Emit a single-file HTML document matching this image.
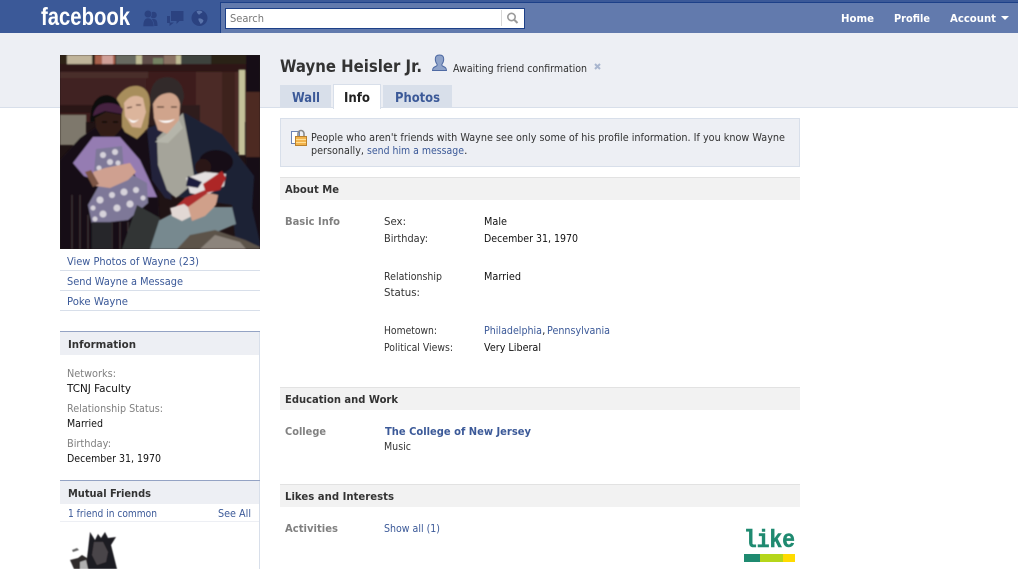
<!DOCTYPE html>
<html><head><meta charset="utf-8"><title>Wayne Heisler Jr.</title>
<style>
html,body{margin:0;padding:0;background:#fff;width:1018px;height:569px;overflow:hidden}
svg{display:block}
text{font-family:"DejaVu Sans","Liberation Sans",sans-serif;font-size:11px;fill:#333}
.b{font-weight:bold}
.l{fill:#3b5998}
.g{fill:#808080}
.k{fill:#111}
.h{font-weight:bold;fill:#333}
</style></head><body>
<svg width="1018" height="569" viewBox="0 0 1018 569" xmlns="http://www.w3.org/2000/svg">
<defs>
<filter id="bl" x="-5%" y="-5%" width="110%" height="110%"><feGaussianBlur stdDeviation="0.8"/></filter>
<filter id="bs"><feGaussianBlur stdDeviation="0.5"/></filter>
<clipPath id="ph"><rect x="60" y="55" width="200" height="194"/></clipPath>
</defs>
<!-- page bands -->
<rect width="1018" height="107" fill="#edeff4"/>
<rect y="107" width="1018" height="1" fill="#d8dfea"/>
<!-- header -->
<rect width="1018" height="33" fill="#3b5998"/>
<rect x="220" y="2" width="798" height="31" fill="#627aad"/>
<rect x="220" y="2" width="798" height="1" fill="#1d4088"/>
<rect x="220" y="2" width="1" height="31" fill="#1d4088"/>
<text x="41" y="25" textLength="89" lengthAdjust="spacingAndGlyphs" style="font-family:'Liberation Sans',sans-serif;font-size:25px;font-weight:bold;fill:#fff">facebook</text>
<!-- friends icon -->
<g fill="#2b4280">
<circle cx="153.500" cy="15" r="3.300"/><path d="M149 26c0-4 1-7 4.500-7s4 3 4 7z"/>
<circle cx="148" cy="14" r="3.800" stroke="#3b5998" stroke-width=".6"/><path d="M143 26.500c0-5 1.500-8.500 5-8.500s6 3.500 6 8.500z" stroke="#3b5998" stroke-width=".6"/>
<!-- messages icon -->
<path d="M171 11h12.500v10h-4l-3 3v-3h-5.500z"/><path d="M167 16h3v6.500h4l-4.500 3.500v-3h-2.500z"/>
<!-- globe -->
<circle cx="199.500" cy="18" r="8"/>
</g>
<path d="M196.500 11.500c2-1.500 5-1 6 .5-1 1.500-2 1-3 2.500-1 .5-2-1-3-3zM198.500 18.500c2-.5 4 .5 5 2-.5 2-2 3-3 3.500-.5-2-2.500-3-2-5.500z" fill="#5a74ab"/>
<!-- search -->
<rect x="225.500" y="8.500" width="299" height="20" fill="#fff" stroke="#1d4088"/>
<text x="230" y="22" textLength="34" lengthAdjust="spacingAndGlyphs" style="fill:#777">Search</text>
<rect x="501" y="10" width="1" height="16" fill="#d8d8d8"/>
<circle cx="511.500" cy="17" r="3.700" fill="none" stroke="#9a9a9a" stroke-width="1.600"/>
<path d="M514 19.500l3.500 3.500" stroke="#9a9a9a" stroke-width="2"/>
<!-- nav -->
<text class="b" x="841" y="22" textLength="33" lengthAdjust="spacingAndGlyphs" style="fill:#fff">Home</text>
<text class="b" x="894" y="22" textLength="36" lengthAdjust="spacingAndGlyphs" style="fill:#fff">Profile</text>
<text class="b" x="950" y="22" textLength="46" lengthAdjust="spacingAndGlyphs" style="fill:#fff">Account</text>
<path d="M1001 16h8l-4 4z" fill="#fff"/>

<!-- photo -->
<g clip-path="url(#ph)">
<rect x="60" y="55" width="200" height="194" fill="#1f1314"/>
<g filter="url(#bl)">
<rect x="60" y="55" width="185" height="10" fill="#2e2018"/>
<rect x="67" y="55" width="25" height="9" fill="#c0b49a"/>
<rect x="95" y="55" width="20" height="9" fill="#a8604c"/>
<rect x="102" y="55" width="11" height="9" fill="#d0a098"/>
<rect x="116" y="55" width="20" height="9" fill="#686a60"/>
<rect x="136" y="55" width="6" height="9" fill="#c0bc94"/>
<rect x="142" y="55" width="22" height="9" fill="#5e4e4a"/>
<rect x="153" y="58" width="10" height="6" fill="#748264"/>
<rect x="164" y="55" width="15" height="9" fill="#8a7264"/>
<rect x="176" y="55" width="5" height="9" fill="#c0bc94"/>
<rect x="181" y="55" width="30" height="9" fill="#3c423c"/>
<rect x="211" y="55" width="35" height="9" fill="#2c2014"/>
<rect x="246" y="55" width="14" height="194" fill="#121012"/>
<rect x="60" y="64" width="186" height="8" fill="#2f1513"/>
<rect x="60" y="72" width="186" height="50" fill="#3c1e1e"/>
<rect x="60" y="72" width="88" height="6" fill="#4a2e2c"/>
<rect x="60" y="78" width="86" height="33" fill="#3f2020"/>
<rect x="60" y="105" width="70" height="8" fill="#2a1414"/>
<rect x="196" y="72" width="44" height="80" fill="#4c2a26"/>
<rect x="222" y="72" width="13" height="85" fill="#3e201c"/>
<rect x="239" y="70" width="6" height="85" fill="#c4c29a"/>
<rect x="246" y="92" width="14" height="65" fill="#4e2a24"/>
<rect x="60" y="115" width="26" height="30" fill="#7e786c"/>
<rect x="120" y="105" width="80" height="20" fill="#2e1a1a"/>
<!-- woman coat -->
<path d="M60 160L80 138 100 124 118 118 160 140 158 185 160 249H60z" fill="#131012"/>
<path d="M72 195v54M80 195v54M88 215v34M96 222v27M104 225v24M112 222v27M120 222v27M128 222v27M136 222v27" stroke="#3c3438" stroke-width="1.200"/>
<!-- woman hair & face -->
<path d="M117 98Q125 85 138 86 150 88 150 105L148 128 137 139 125 132 118 120z" fill="#a88e5c"/>
<path d="M124 103Q132 92 143 98L146 112 141 128 132 127 125 116z" fill="#dcb59c"/>
<path d="M128 118q6 5 11 1-4 5-8 3z" fill="#fff"/>
<path d="M127 108l5-1M136 105l5 0" stroke="#5a3a30" stroke-width="1.200"/>
<!-- girl -->
<path d="M90 118Q92 95 107 95 118 96 122 110L122 120 90 122z" fill="#100c0c"/>
<path d="M93 116Q95 103 108 103 118 103 123 109L122 114 105 111z" fill="#45203f"/>
<path d="M95 118L106 112 122 115 122 128 113 138 101 136 96 128z" fill="#311a14"/>
<path d="M102 122l5 0M113 122l5 0" stroke="#0d0808" stroke-width="1.500"/>
<!-- cardigan -->
<path d="M73 163L93 137 120 137 140 160 157 197 148 197 130 167 118 172 102 167 95 180 84 176z" fill="#957cb2"/>
<!-- dress -->
<path d="M96 149L122 146 124 170 147 183 148 203 128 220 92 224 88 205 103 178 94 172z" fill="#7e7898"/>
<g fill="#d6d2da">
<circle cx="103" cy="155" r="3"/><circle cx="115" cy="152" r="3"/><circle cx="110" cy="162" r="3"/><circle cx="99" cy="168" r="2.500"/><circle cx="118" cy="163" r="2.500"/>
<circle cx="100" cy="200" r="3.500"/><circle cx="112" cy="195" r="3"/><circle cx="124" cy="192" r="3.500"/><circle cx="136" cy="190" r="3"/><circle cx="143" cy="198" r="2.500"/><circle cx="130" cy="204" r="3.500"/><circle cx="117" cy="208" r="3.500"/><circle cx="103" cy="214" r="3.500"/><circle cx="93" cy="208" r="2.500"/><circle cx="95" cy="219" r="2.500"/>
</g>
<rect x="92" y="222" width="20" height="27" fill="#25262a"/>
<!-- woman hands -->
<path d="M93 172L105 168 130 163 136 172 128 180 110 188 96 186z" fill="#cfa090"/>
<path d="M85 172l6-2 8 14-6 3z" fill="#7c5444"/>
<!-- man jacket -->
<path d="M148 128L185 113 222 134 254 176 252 208 260 243 260 249 236 249 232 205 165 195z" fill="#1f2036"/>
<path d="M147 128L160 125 165 170 172 200 165 198 152 180z" fill="#20223a"/>
<!-- shirt -->
<path d="M157 138L183 113 190 150 195 182 176 198 167 190 158 165z" fill="#a5a49a"/>
<!-- man -->
<path d="M150 100Q150 78 167 77 183 78 184 97L181 108 152 108z" fill="#332a2a"/>
<path d="M153 104Q158 93 170 93 178 94 180 104L179 122 168 134 158 130 154 118z" fill="#d0a48c"/>
<path d="M158 120q9 6 17-1-9 3-17 1z" fill="#fff"/>
<path d="M157 107l7 0M171 107l6 0" stroke="#4e352c" stroke-width="1.200"/>
<path d="M155 142l12-8 12-14 4 8-15 15z" fill="#b5b5aa"/>
<!-- jeans -->
<path d="M150 249L156 222 185 207 232 207 236 224 210 235 185 249z" fill="#77898f"/>
<path d="M137 205L160 218 150 249 122 249z" fill="#323436"/>
<!-- baby -->
<ellipse cx="216" cy="162" rx="17" ry="12" fill="#161012"/>
<ellipse cx="203" cy="167" rx="8" ry="8" fill="#2a1818"/>
<path d="M186 178L205 172 226 174 224 186 205 196 190 193z" fill="#e4e0e0"/>
<path d="M203 184L222 171 226 178 220 190 206 193z" fill="#ad2828"/>
<path d="M188 176l14 6-4 6-12-2z" fill="#1a1d3e"/>
<path d="M185 198L205 190 215 205 190 215 175 207z" fill="#ad2e2e"/>
<path d="M170 208l14-4 8 6 0 6-10 5-10-5z" fill="#e2d8d4"/>
<path d="M188 207L208 193 218 195 216 205 205 216 192 221z" fill="#d0a08a"/>
<path d="M218 195l12-4 4 5-14 6z" fill="#1f2036"/>
<!-- fur -->
<path d="M177 249L190 235 215 230 245 240 260 247 260 249z" fill="#5c5249"/>
<path d="M200 249l15-14 25 7 6 7z" fill="#8c847c"/>
</g>
</g>

<!-- left links -->
<text class="l" x="67" y="265" textLength="132" lengthAdjust="spacingAndGlyphs">View Photos of Wayne (23)</text>
<rect x="60" y="270" width="200" height="1" fill="#d8dfea"/>
<text class="l" x="67" y="285" textLength="116" lengthAdjust="spacingAndGlyphs">Send Wayne a Message</text>
<rect x="60" y="290" width="200" height="1" fill="#d8dfea"/>
<text class="l" x="67" y="305" textLength="61" lengthAdjust="spacingAndGlyphs">Poke Wayne</text>
<rect x="60" y="310" width="200" height="1" fill="#d8dfea"/>
<!-- left column -->
<rect x="259" y="331" width="1" height="238" fill="#d8dfea"/>
<rect x="60" y="332" width="199" height="23" fill="#edeff4"/>
<rect x="60" y="331" width="200" height="1" fill="#94a3c4"/>
<text class="h" x="68" y="348" textLength="68" lengthAdjust="spacingAndGlyphs">Information</text>
<text class="g" x="67" y="377" textLength="49" lengthAdjust="spacingAndGlyphs">Networks:</text>
<text class="k" x="67" y="392" textLength="64" lengthAdjust="spacingAndGlyphs">TCNJ Faculty</text>
<text class="g" x="67" y="412" textLength="96" lengthAdjust="spacingAndGlyphs">Relationship Status:</text>
<text class="k" x="67" y="427" textLength="36" lengthAdjust="spacingAndGlyphs">Married</text>
<text class="g" x="67" y="447" textLength="44" lengthAdjust="spacingAndGlyphs">Birthday:</text>
<text class="k" x="67" y="462" textLength="94" lengthAdjust="spacingAndGlyphs">December 31, 1970</text>
<rect x="60" y="481" width="199" height="23" fill="#edeff4"/>
<rect x="60" y="480" width="200" height="1" fill="#94a3c4"/>
<text class="h" x="68" y="497" textLength="83" lengthAdjust="spacingAndGlyphs">Mutual Friends</text>
<text class="l" x="68" y="517" textLength="89" lengthAdjust="spacingAndGlyphs">1 friend in common</text>
<text class="l" x="218" y="517" textLength="33" lengthAdjust="spacingAndGlyphs">See All</text>
<rect x="60" y="521" width="199" height="1" fill="#edeff4"/>
<!-- thumb -->
<g filter="url(#bs)">
<path d="M88 550L90 532 95 540 98 534 101 538 105 532 108 538 116 537 111 545 117 569H84L87 558z" fill="#1f1c20"/>
<path d="M94 542l9 0 5 10-2 10-9 3-5-10z" fill="#4a4448"/>
<path d="M70 560l8-2 4-3 5 3 1 11H74z" fill="#2e2a2c"/>
<path d="M72 550l5-2 2 2-6 2z" fill="#666"/>
<path d="M80 562l6-2 2 9h-8z" fill="#b0b0b0"/>
</g>

<!-- name -->
<text class="b" x="280" y="72" textLength="142" lengthAdjust="spacingAndGlyphs" style="font-size:17px;fill:#333">Wayne Heisler Jr.</text>
<path d="M432.500 70.500c0-3 2-3.500 4-4.500.8-.5.8-1.500.3-2.200-1-1.300-1.500-3-1.500-4.800 0-2.500 1.500-4 4.200-4s4.200 1.500 4.200 4c0 1.800-.5 3.500-1.500 4.800-.5.7-.5 1.700.3 2.200 2 1 4 1.500 4 4.500z" fill="#8fa3c9" stroke="#4f6aa3" stroke-width="1"/>
<text x="453" y="72" textLength="134" lengthAdjust="spacingAndGlyphs">Awaiting friend confirmation</text>
<path d="M595 64l5 5M600 64l-5 5" stroke="#a9b6cf" stroke-width="2"/>
<!-- tabs -->
<rect x="280" y="85" width="51" height="22" fill="#d8dfea"/>
<rect x="383" y="85" width="69" height="22" fill="#d8dfea"/>
<rect x="333.500" y="84.500" width="47" height="24" fill="#fff" stroke="#d8dfea"/>
<rect x="334" y="107" width="46" height="2" fill="#fff"/>
<text class="b l" x="292" y="102" textLength="28" lengthAdjust="spacingAndGlyphs" style="font-size:13px">Wall</text>
<text class="b" x="344" y="102" textLength="26" lengthAdjust="spacingAndGlyphs" style="font-size:13px;fill:#222">Info</text>
<text class="b l" x="395" y="102" textLength="45" lengthAdjust="spacingAndGlyphs" style="font-size:13px">Photos</text>

<!-- notice -->
<rect x="280.500" y="118.500" width="519" height="48" fill="#edeff4" stroke="#d8dfea"/>
<rect x="291.500" y="131.500" width="8" height="12" fill="#fff" stroke="#6d84b4"/>
<path d="M298 137v-3.500a3 3 0 0 1 6 0v3.500" fill="none" stroke="#8a8a8a" stroke-width="1.600"/>
<rect x="295.500" y="136.500" width="11" height="9" fill="#f2b34c" stroke="#b9812e"/>
<rect x="296" y="139" width="10" height="1" fill="#ffdf95"/><rect x="296" y="142" width="10" height="1" fill="#ffdf95"/>
<text x="311" y="141" textLength="474" lengthAdjust="spacingAndGlyphs">People who aren't friends with Wayne see only some of his profile information. If you know Wayne</text>
<text x="311" y="154" textLength="53" lengthAdjust="spacingAndGlyphs">personally,</text>
<text class="l" x="367" y="154" textLength="97" lengthAdjust="spacingAndGlyphs">send him a message</text>
<text x="464" y="154">.</text>

<!-- About -->
<rect x="280" y="177" width="520" height="23" fill="#f2f2f2"/><rect x="280" y="177" width="520" height="1" fill="#e2e2e2"/>
<text class="h" x="285" y="193" textLength="54" lengthAdjust="spacingAndGlyphs">About Me</text>
<text class="b g" x="285" y="225" textLength="55" lengthAdjust="spacingAndGlyphs">Basic Info</text>
<text x="384" y="225" textLength="22" lengthAdjust="spacingAndGlyphs">Sex:</text>
<text class="k" x="484" y="225" textLength="23" lengthAdjust="spacingAndGlyphs">Male</text>
<text x="384" y="242" textLength="44" lengthAdjust="spacingAndGlyphs">Birthday:</text>
<text class="k" x="484" y="242" textLength="94" lengthAdjust="spacingAndGlyphs">December 31, 1970</text>
<text x="384" y="280" textLength="58" lengthAdjust="spacingAndGlyphs">Relationship</text>
<text x="384" y="296" textLength="36" lengthAdjust="spacingAndGlyphs">Status:</text>
<text class="k" x="484" y="280" textLength="37" lengthAdjust="spacingAndGlyphs">Married</text>
<text x="384" y="334" textLength="53" lengthAdjust="spacingAndGlyphs">Hometown:</text>
<text class="l" x="484" y="334" textLength="58" lengthAdjust="spacingAndGlyphs">Philadelphia</text>
<text x="542" y="334">,</text>
<text class="l" x="547" y="334" textLength="63" lengthAdjust="spacingAndGlyphs">Pennsylvania</text>
<text x="384" y="351" textLength="69" lengthAdjust="spacingAndGlyphs">Political Views:</text>
<text class="k" x="484" y="351" textLength="57" lengthAdjust="spacingAndGlyphs">Very Liberal</text>

<!-- Education -->
<rect x="280" y="387" width="520" height="23" fill="#f2f2f2"/><rect x="280" y="387" width="520" height="1" fill="#e2e2e2"/>
<text class="h" x="285" y="403" textLength="113" lengthAdjust="spacingAndGlyphs">Education and Work</text>
<text class="b g" x="285" y="435" textLength="41" lengthAdjust="spacingAndGlyphs">College</text>
<text class="b l" x="385" y="435" textLength="146" lengthAdjust="spacingAndGlyphs">The College of New Jersey</text>
<text x="384" y="450" textLength="27" lengthAdjust="spacingAndGlyphs">Music</text>

<!-- Likes -->
<rect x="280" y="484" width="520" height="23" fill="#f2f2f2"/><rect x="280" y="484" width="520" height="1" fill="#e2e2e2"/>
<text class="h" x="285" y="500" textLength="109" lengthAdjust="spacingAndGlyphs">Likes and Interests</text>
<text class="b g" x="285" y="532" textLength="53" lengthAdjust="spacingAndGlyphs">Activities</text>
<text class="l" x="384" y="532" textLength="56" lengthAdjust="spacingAndGlyphs">Show all (1)</text>
<!-- like logo -->
<text x="744" y="547" textLength="51" lengthAdjust="spacingAndGlyphs" style="font-family:'Liberation Mono',monospace;font-weight:bold;font-size:25px;fill:#1f8a70;stroke:#1f8a70;stroke-width:.5px">like</text>
<rect x="744" y="554" width="16" height="8" fill="#1f8a70"/>
<rect x="760" y="554" width="23" height="8" fill="#b5d61a"/>
<rect x="783" y="554" width="12" height="8" fill="#ffdb00"/>
</svg>
</body></html>
